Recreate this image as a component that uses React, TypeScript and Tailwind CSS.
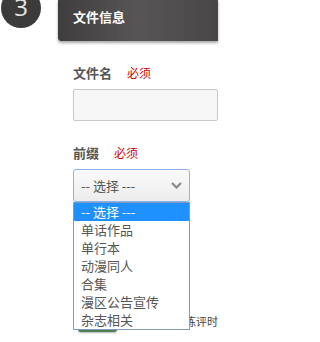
import React from "react";

const cjk = { fontFamily: '"Noto Sans CJK SC", "Noto Sans", sans-serif' };

export default function App() {
  const options = ["-- 选择 ---", "单话作品", "单行本", "动漫同人", "合集", "漫区公告宣传", "杂志相关"];
  return (
    <div className="relative w-[231px] h-[342px] overflow-hidden bg-white" style={cjk}>
      <div className="ml-[58px] w-[160px]">
        <div className="h-[41px] rounded-bl-[3px] bg-gradient-to-r from-[#403d3e] via-[#575556] to-[#494647] shadow-[0_2px_3px_rgba(0,0,0,0.35)] pl-[15px] pt-[3px]">
          <span className="text-[13px] leading-[20px] font-bold text-white">文件信息</span>
        </div>
        <div className="pl-[15px]">
          <div className="mt-[23px] flex items-center h-[18px]">
            <span className="text-[13px] font-bold text-[#555]">文件名</span>
            <span className="ml-[15px] text-[12px] text-[#cc0000]">必须</span>
          </div>
          <div className="mt-[7px] h-[32px] rounded-[2px] border border-[#c8c8c8] bg-[#f7f7f7]" />
          <div className="mt-[23px] flex items-center h-[18px]">
            <span className="text-[13px] font-bold text-[#555]">前缀</span>
            <span className="ml-[15px] text-[12px] text-[#cc0000]">必须</span>
          </div>
          <div className="mt-[7px] w-[117px] h-[33px] rounded-[3px] border border-[#8db1ec] bg-gradient-to-b from-[#fbfbfb] to-[#ececec] flex items-center pl-[7px] pr-[7px] justify-between">
            <span className="text-[13px] text-[#555]">-- 选择 ---</span>
            <svg width="11" height="7" viewBox="0 0 11 7">
              <polyline points="1,1 5.5,5.5 10,1" fill="none" stroke="#8a8a8a" strokeWidth="2.2" />
            </svg>
          </div>
          <div className="mt-[108px] flex items-center justify-between">
            <div className="ml-[5px] w-[39px] h-[22px] rounded-[3px] bg-[#4f7f4f] shadow-[0_1px_2px_rgba(0,0,0,0.3)]" />
            <span className="text-[11px] text-[#444]">训练评时</span>
          </div>
        </div>
      </div>

      <div className="absolute left-[1px] top-[-12px] w-[40px] h-[40px] rounded-full bg-[#3b3b3b] flex items-end justify-center pb-[9px]">
        <span className="text-[24px] leading-[24px] text-[#e6e6e6]" style={{ fontFamily: '"Open Sans", sans-serif' }}>3</span>
      </div>

      <div className="absolute left-[73px] top-[202px] w-[117px] border border-[#7f9db9] bg-white">
        {options.map((o, i) => (
          <div
            key={o}
            className={`h-[18px] pl-[7px] flex items-center text-[13px] leading-[18px] ${i === 0 ? "bg-[#1e90ff] text-white" : "text-[#555]"}`}
          >
            {o}
          </div>
        ))}
      </div>
    </div>
  );
}
